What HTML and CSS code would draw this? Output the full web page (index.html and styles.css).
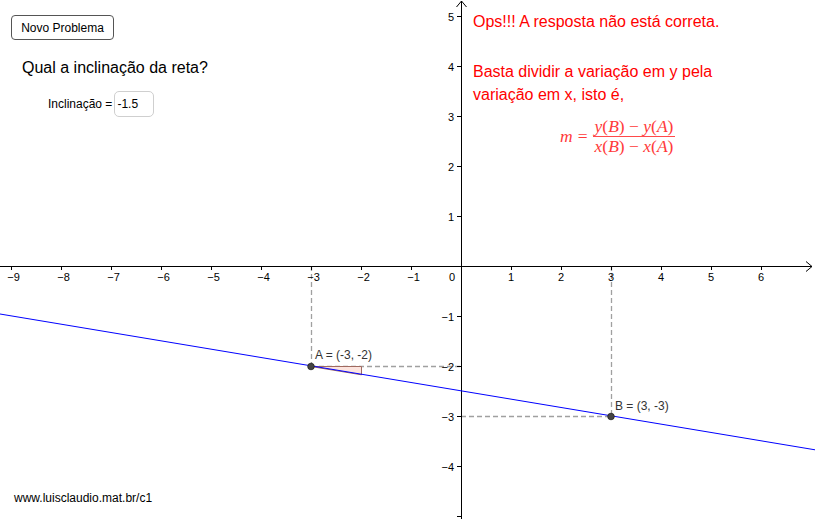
FILE: index.html
```html
<!DOCTYPE html>
<html lang="pt">
<head>
<meta charset="utf-8">
<title>Inclinação da reta</title>
<link rel="stylesheet" href="styles.css">
</head>
<body>
<div class="applet">
  <svg class="graph" width="815" height="522" viewBox="0 0 815 522" xmlns="http://www.w3.org/2000/svg">
    <!-- dashed guides -->
    <g class="guide">
      <line x1="311.5" y1="266" x2="311.5" y2="366"/>
      <line x1="311" y1="366.5" x2="461" y2="366.5"/>
      <line x1="611.5" y1="266" x2="611.5" y2="416"/>
      <line x1="461" y1="416.5" x2="611" y2="416.5"/>
    </g>
    <!-- slope triangle -->
    <polygon class="tri" points="311,366.5 361.5,366.5 361.5,374.8"/>
    <!-- axes -->
    <g class="axis">
      <line x1="0" y1="266.5" x2="812" y2="266.5"/>
      <polyline points="806,261.5 812,266.5 806,271.5"/>
      <line x1="461.5" y1="1" x2="461.5" y2="519"/>
      <polyline points="456.5,7 461.5,1 466.5,7"/>
      <g class="ticks">
        <line x1="11.5" y1="266" x2="11.5" y2="270"/>
        <line x1="61.5" y1="266" x2="61.5" y2="270"/>
        <line x1="111.5" y1="266" x2="111.5" y2="270"/>
        <line x1="161.5" y1="266" x2="161.5" y2="270"/>
        <line x1="211.5" y1="266" x2="211.5" y2="270"/>
        <line x1="261.5" y1="266" x2="261.5" y2="270"/>
        <line x1="311.5" y1="266" x2="311.5" y2="270"/>
        <line x1="361.5" y1="266" x2="361.5" y2="270"/>
        <line x1="411.5" y1="266" x2="411.5" y2="270"/>
        <line x1="511.5" y1="266" x2="511.5" y2="270"/>
        <line x1="561.5" y1="266" x2="561.5" y2="270"/>
        <line x1="611.5" y1="266" x2="611.5" y2="270"/>
        <line x1="661.5" y1="266" x2="661.5" y2="270"/>
        <line x1="711.5" y1="266" x2="711.5" y2="270"/>
        <line x1="761.5" y1="266" x2="761.5" y2="270"/>
        <line x1="457" y1="16.5" x2="461" y2="16.5"/>
        <line x1="457" y1="66.5" x2="461" y2="66.5"/>
        <line x1="457" y1="116.5" x2="461" y2="116.5"/>
        <line x1="457" y1="166.5" x2="461" y2="166.5"/>
        <line x1="457" y1="216.5" x2="461" y2="216.5"/>
        <line x1="457" y1="316.5" x2="461" y2="316.5"/>
        <line x1="457" y1="366.5" x2="461" y2="366.5"/>
        <line x1="457" y1="416.5" x2="461" y2="416.5"/>
        <line x1="457" y1="466.5" x2="461" y2="466.5"/>
        <line x1="457" y1="516.5" x2="461" y2="516.5"/>
      </g>
    </g>
    <g class="xlabels">
      <text x="13.5" y="281">−9</text>
      <text x="63.5" y="281">−8</text>
      <text x="113.5" y="281">−7</text>
      <text x="163.5" y="281">−6</text>
      <text x="213.5" y="281">−5</text>
      <text x="263.5" y="281">−4</text>
      <text x="313.5" y="281">−3</text>
      <text x="363.5" y="281">−2</text>
      <text x="413.5" y="281">−1</text>
      <text x="452" y="281">0</text>
      <text x="511" y="281">1</text>
      <text x="561" y="281">2</text>
      <text x="611" y="281">3</text>
      <text x="661" y="281">4</text>
      <text x="711" y="281">5</text>
      <text x="761" y="281">6</text>
    </g>
    <g class="ylabels">
      <text x="454" y="20.5">5</text>
      <text x="454" y="70.5">4</text>
      <text x="454" y="120.5">3</text>
      <text x="454" y="170.5">2</text>
      <text x="454" y="220.5">1</text>
      <text x="454" y="320.5">−1</text>
      <text x="454" y="370.5">−2</text>
      <text x="454" y="420.5">−3</text>
      <text x="454" y="470.5">−4</text>
    </g>
    <!-- line through A and B -->
    <line class="reta" x1="0" y1="314" x2="815" y2="449.8"/>
    <!-- points -->
    <circle class="pt" cx="311" cy="366.5" r="3.3"/>
    <circle class="pt" cx="611" cy="416.5" r="3.3"/>
    <text class="ptlabel" x="315" y="359">A = (-3, -2)</text>
    <text class="ptlabel" x="615" y="410">B = (3, -3)</text>
  </svg>

  <button class="btn-novo" type="button">Novo Problema</button>
  <div class="question">Qual a inclinação da reta?</div>
  <div class="answer">
    <span class="answer-label">Inclinação =</span>
    <span class="answer-box">-1.5</span>
  </div>

  <div class="feedback">
    <p class="fb-line fb-first">Ops!!! A resposta não está correta.</p>
    <p class="fb-line fb-second">Basta dividir a variação em y pela<br>variação em x, isto é,</p>
    <div class="formula">
      <span class="f-lhs">m</span><span class="f-eq">=</span>
      <span class="frac">
        <span class="num"><i>y</i>(<i>B</i>) − <i>y</i>(<i>A</i>)</span>
        <span class="den"><i>x</i>(<i>B</i>) − <i>x</i>(<i>A</i>)</span>
      </span>
    </div>
  </div>

  <div class="footer">www.luisclaudio.mat.br/c1</div>
</div>
</body>
</html>
```

FILE: styles.css
```css
html, body {
  margin: 0;
  padding: 0;
  background: #ffffff;
}

.applet {
  position: relative;
  width: 815px;
  height: 522px;
  overflow: hidden;
  font-family: "Liberation Sans", Arial, sans-serif;
  color: #000;
}

.graph {
  position: absolute;
  left: 0;
  top: 0;
  display: block;
}

.guide line {
  stroke: #a0a0a0;
  stroke-width: 1.3;
  stroke-dasharray: 5 3;
}

.tri {
  fill: #fce4de;
  stroke: #a06a60;
  stroke-width: 1;
}

.axis line,
.axis polyline {
  stroke: #000;
  stroke-width: 1;
  fill: none;
}

.xlabels text,
.ylabels text {
  font-family: "Liberation Sans", Arial, sans-serif;
  font-size: 11px;
  fill: #000;
}

.xlabels text {
  text-anchor: middle;
}

.ylabels text {
  text-anchor: end;
}

.reta {
  stroke: #0000ff;
  stroke-width: 1;
}

.pt {
  fill: #444444;
  stroke: #222;
  stroke-width: 0.8;
}

.ptlabel {
  font-family: "Liberation Sans", Arial, sans-serif;
  font-size: 12px;
  fill: #333;
}

.btn-novo {
  position: absolute;
  left: 11px;
  top: 15px;
  width: 103px;
  height: 25px;
  margin: 0;
  padding: 0;
  border: 1px solid #555;
  border-radius: 4px;
  background: #fff;
  font-family: "Liberation Sans", Arial, sans-serif;
  font-size: 12px;
  color: #000;
}

.question {
  position: absolute;
  left: 22px;
  top: 58px;
  font-size: 16px;
  line-height: 19px;
}

.answer {
  position: absolute;
  left: 48px;
  top: 91px;
  display: flex;
  align-items: center;
  gap: 2px;
  font-size: 12px;
}

.answer-box {
  box-sizing: border-box;
  width: 40px;
  height: 26px;
  border: 1px solid #cfcfcf;
  border-radius: 5px;
  padding-left: 2px;
  display: flex;
  align-items: center;
}

.feedback {
  position: absolute;
  left: 473px;
  top: 10px;
  color: #ff0000;
  font-size: 16px;
}

.fb-line {
  margin: 0;
  line-height: 23px;
}

.fb-second {
  margin-top: 27px;
}

.formula {
  display: flex;
  align-items: center;
  margin-left: 87px;
  margin-top: 12px;
  font-family: "Liberation Serif", "Times New Roman", serif;
  font-size: 17.5px;
  color: #ff3a3a;
}

.f-lhs {
  font-style: italic;
}

.f-eq {
  margin: 0 5px 0 5px;
}

.frac {
  display: inline-flex;
  flex-direction: column;
  align-items: center;
}

.frac .num {
  padding: 0 2px 1px;
  border-bottom: 1px solid #ff4a4a;
  line-height: 17px;
}

.frac .den {
  padding-top: 1px;
  line-height: 17px;
}

.footer {
  position: absolute;
  left: 14px;
  top: 491px;
  font-size: 12px;
  color: #000;
}
```
